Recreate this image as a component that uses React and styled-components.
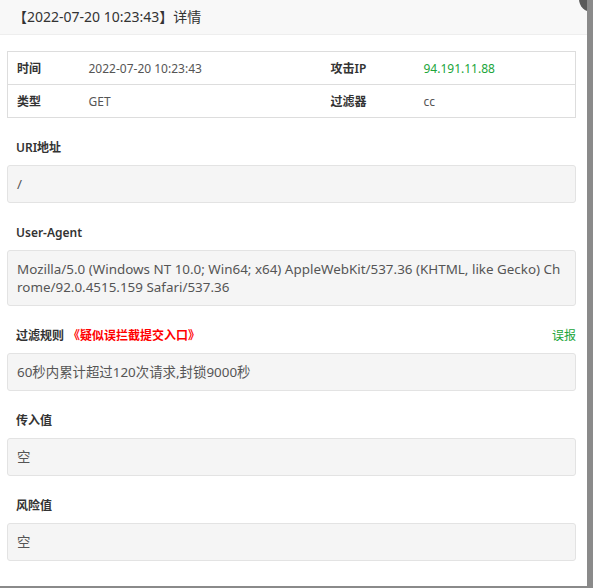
import React from 'react';
import styled, { createGlobalStyle } from 'styled-components';

const GlobalStyle = createGlobalStyle`
  html, body {
    margin: 0;
    padding: 0;
    background: #8a8a8a;
  }
  body {
    font-family: "Segoe UI", "Noto Sans", "Noto Sans CJK SC", sans-serif;
    color: #333;
  }
`;

const Layer = styled.div`
  position: relative;
  width: 587px;
  height: 586px;
  background: #fff;
  overflow: hidden;
`;

const CloseDot = styled.span`
  position: absolute;
  top: -14px;
  right: -18px;
  width: 26px;
  height: 26px;
  border-radius: 50%;
  background: #5a5a5a;
`;

const Header = styled.div`
  height: 34px;
  line-height: 34px;
  padding-left: 13px;
  background: #f8f8f8;
  border-bottom: 1px solid #eee;
  font-size: 14px;
  color: #333;
`;

const Body = styled.div`
  padding: 16px 11px 0 7px;
`;

const Table = styled.table`
  width: 569px;
  border-collapse: collapse;
  table-layout: fixed;
  font-size: 12px;
  border: 1px solid #ddd;
`;

const Row = styled.tr`
  border-bottom: 1px solid #ddd;
`;

const Cell = styled.td`
  height: 32px;
  padding: 0 9px;
  color: ${(p) => p.$color || '#555'};
  font-weight: ${(p) => (p.$head ? 600 : 400)};
  ${(p) => p.$head && 'color: #333;'}
`;

const Section = styled.div`
  margin-top: 19px;
`;

const LabelRow = styled.div`
  display: flex;
  justify-content: space-between;
  align-items: center;
  height: 20px;
  padding-left: 9px;
  margin-bottom: 8px;
  font-size: 12px;
`;

const Label = styled.span`
  font-weight: 600;
  color: #333;
`;

const Tag = styled.span`
  margin-left: 4px;
  color: #f00;
  font-weight: 600;
`;

const Report = styled.a`
  color: #20a53a;
  font-size: 12px;
  cursor: pointer;
`;

const Box = styled.div`
  padding: 9px 10px 9px 9px;
  line-height: 18px;
  min-height: 18px;
  background: #f5f5f5;
  border: 1px solid #e3e3e3;
  border-radius: 3px;
  font-size: 13.42px;
  color: #555;
  word-break: break-all;
`;

const rows = [
  [['时间', '2022-07-20 10:23:43'], ['攻击IP', '94.191.11.88', '#20a53a']],
  [['类型', 'GET'], ['过滤器', 'cc']],
];

export default function App() {
  return (
    <>
      <GlobalStyle />
      <Layer>
        <CloseDot />
        <Header>【2022-07-20 10:23:43】详情</Header>
        <Body>
          <Table>
            <colgroup>
              <col style={{ width: 72 }} />
              <col style={{ width: 242 }} />
              <col style={{ width: 93 }} />
              <col />
            </colgroup>
            <tbody>
              {rows.map((r, i) => (
                <Row key={i}>
                  {r.map(([k, v, c]) => (
                    <React.Fragment key={k}>
                      <Cell $head>{k}</Cell>
                      <Cell $color={c}>{v}</Cell>
                    </React.Fragment>
                  ))}
                </Row>
              ))}
            </tbody>
          </Table>

          <Section>
            <LabelRow><Label>URI地址</Label></LabelRow>
            <Box>/</Box>
          </Section>

          <Section>
            <LabelRow><Label>User-Agent</Label></LabelRow>
            <Box>
              Mozilla/5.0 (Windows NT 10.0; Win64; x64) AppleWebKit/537.36 (KHTML, like Gecko) Chrome/92.0.4515.159 Safari/537.36
            </Box>
          </Section>

          <Section>
            <LabelRow>
              <Label>过滤规则<Tag>《疑似误拦截提交入口》</Tag></Label>
              <Report>误报</Report>
            </LabelRow>
            <Box>60秒内累计超过120次请求,封锁9000秒</Box>
          </Section>

          <Section>
            <LabelRow><Label>传入值</Label></LabelRow>
            <Box>空</Box>
          </Section>

          <Section>
            <LabelRow><Label>风险值</Label></LabelRow>
            <Box>空</Box>
          </Section>
        </Body>
      </Layer>
    </>
  );
}
